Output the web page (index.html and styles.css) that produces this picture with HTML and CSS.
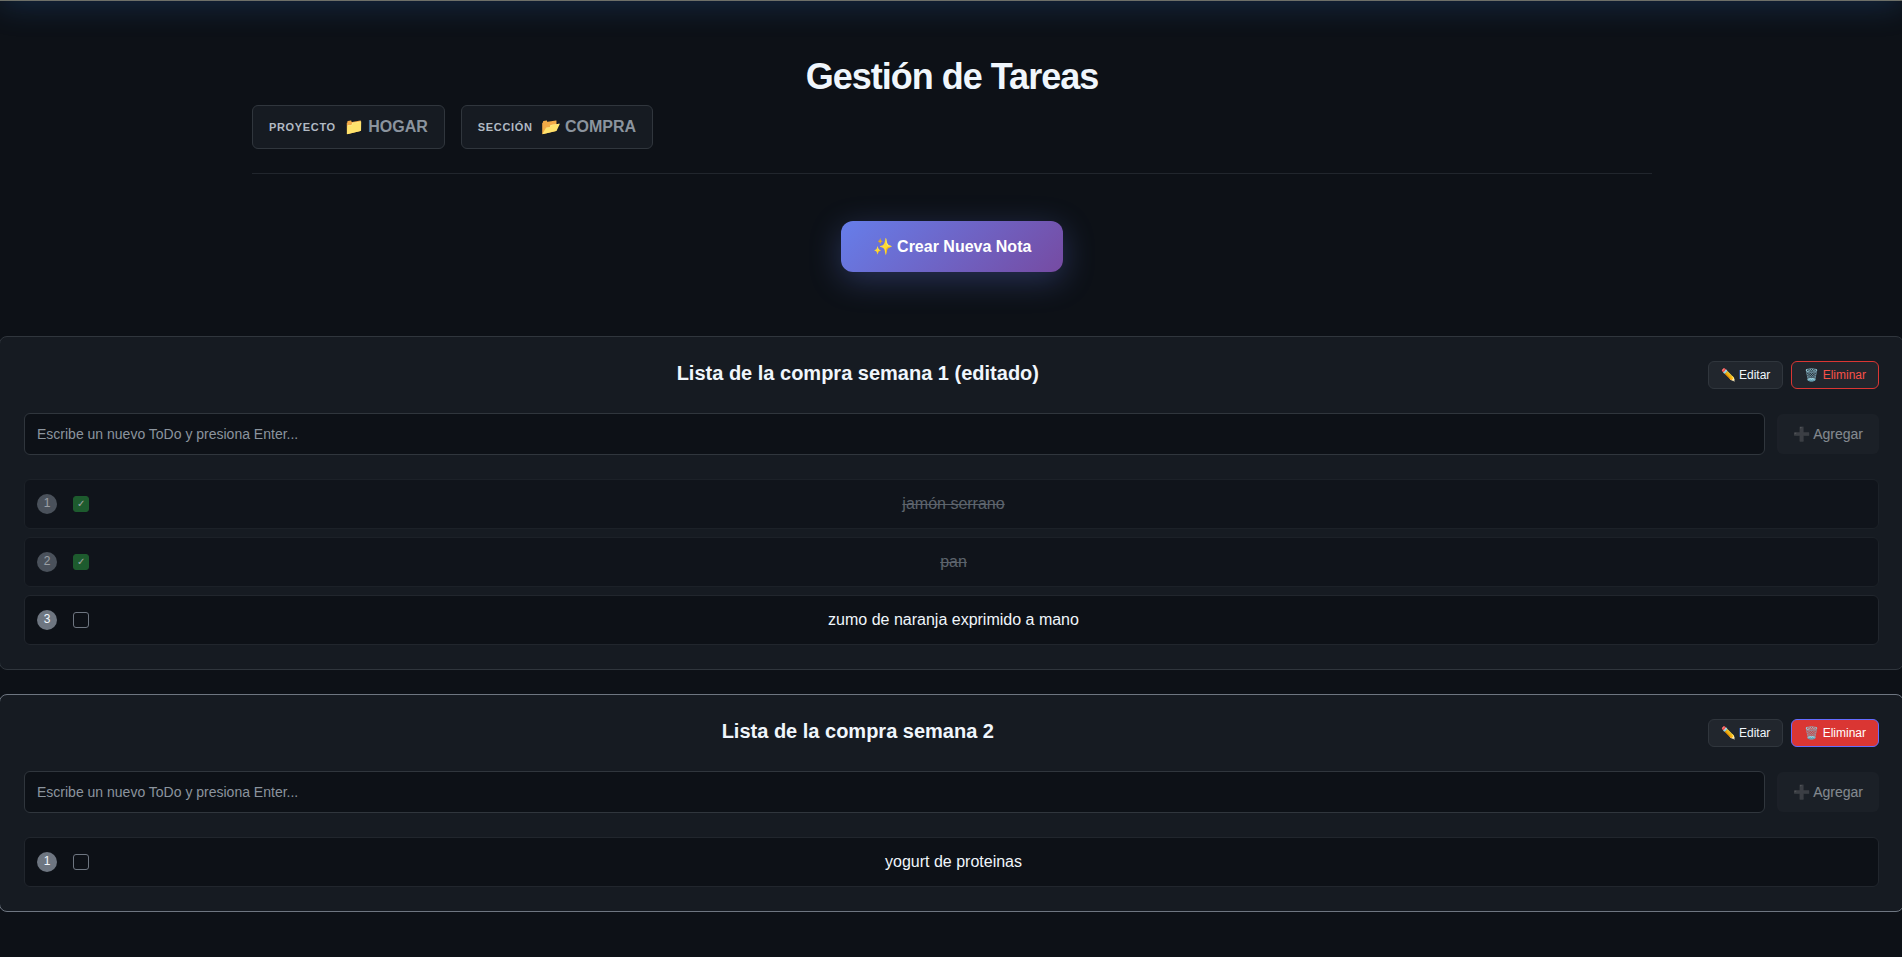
FILE: index.html
```html
<!DOCTYPE html>
<html lang="es">
<head>
<meta charset="utf-8">
<meta name="viewport" content="width=device-width, initial-scale=1">
<title>Gestión de Tareas</title>
<link rel="stylesheet" href="styles.css">
</head>
<body>
<div class="topbar-glow"></div>
<main class="page">
  <header class="header">
    <h1 class="header-title">Gestión de Tareas</h1>
    <div class="crumbs">
      <div class="crumb"><span class="crumb-label">Proyecto</span><span class="crumb-value">📁 HOGAR</span></div>
      <div class="crumb"><span class="crumb-label">Sección</span><span class="crumb-value">📂 COMPRA</span></div>
    </div>
  </header>
  <div class="create">
    <button class="create-button" type="button">✨ Crear Nueva Nota</button>
  </div>
  <section class="notes">
    <article class="note">
      <div class="note-header">
        <h2 class="note-title">Lista de la compra semana 1 (editado)</h2>
        <div class="note-actions">
          <button class="action" type="button">✏️ Editar</button>
          <button class="action action-delete" type="button">🗑️ Eliminar</button>
        </div>
      </div>
      <form class="todo-form">
        <input class="todo-input" type="text" aria-label="Nuevo ToDo" placeholder="Escribe un nuevo ToDo y presiona Enter...">
        <button class="todo-add" type="submit" disabled>➕ Agregar</button>
      </form>
      <ol class="todos">
        <li class="todo todo-done"><span class="todo-number">1</span><input class="todo-check" type="checkbox" id="todo-1" checked><label class="todo-text" for="todo-1">jamón serrano</label></li>
        <li class="todo todo-done"><span class="todo-number">2</span><input class="todo-check" type="checkbox" id="todo-2" checked><label class="todo-text" for="todo-2">pan</label></li>
        <li class="todo"><span class="todo-number">3</span><input class="todo-check" type="checkbox" id="todo-3"><label class="todo-text" for="todo-3">zumo de naranja exprimido a mano</label></li>
      </ol>
    </article>
    <article class="note note-active">
      <div class="note-header">
        <h2 class="note-title">Lista de la compra semana 2</h2>
        <div class="note-actions">
          <button class="action" type="button">✏️ Editar</button>
          <button class="action action-delete action-hot" type="button">🗑️ Eliminar</button>
        </div>
      </div>
      <form class="todo-form">
        <input class="todo-input" type="text" aria-label="Nuevo ToDo" placeholder="Escribe un nuevo ToDo y presiona Enter...">
        <button class="todo-add" type="submit" disabled>➕ Agregar</button>
      </form>
      <ol class="todos">
        <li class="todo"><span class="todo-number">1</span><input class="todo-check" type="checkbox" id="todo-4"><label class="todo-text" for="todo-4">yogurt de proteinas</label></li>
      </ol>
    </article>
  </section>
</main>
</body>
</html>
```

FILE: styles.css
```css
* {
  box-sizing: border-box;
}

body {
  margin: 0;
  overflow-x: hidden;
  background: #0d1117;
  color: #f0f6fc;
  font-family: "Liberation Sans", Arial, sans-serif;
  font-size: 16px;
  line-height: 24px;
}

button,
input {
  font-family: inherit;
}

/* Lower edge and halo of the bar above the page */
.topbar-glow {
  position: absolute;
  top: -60px;
  left: 0;
  right: 0;
  height: 61px;
  border-bottom: 1px solid #6e7068;
  box-shadow: 0 4px 32px rgba(48, 130, 230, 0.22);
}

.page {
  margin-right: -2px;
  padding: 52px 0 40px;
}

.header {
  max-width: 1400px;
  margin: 0 auto;
  padding-bottom: 24px;
  border-bottom: 1px solid #21262d;
}

.header-title {
  margin: 0 0 4px;
  font-size: 36px;
  line-height: 49px;
  letter-spacing: -1px;
  text-align: center;
}

.crumbs {
  display: flex;
  gap: 16px;
}

.crumb {
  display: flex;
  align-items: center;
  gap: 8px;
  padding: 8px 16px;
  border: 1px solid #30363d;
  border-radius: 6px;
  background: #161b22;
  line-height: 26px;
  font-weight: 600;
}

.crumb-label {
  color: #b1bac4;
  font-size: 11px;
  letter-spacing: 0.06em;
  text-transform: uppercase;
}

.crumb-value {
  color: #8b949e;
}

.create {
  display: flex;
  justify-content: center;
  padding: 47px 0 64px;
}

.create-button {
  padding: 16px 32px;
  border: 0;
  border-radius: 12px;
  background: linear-gradient(135deg, #667eea, #764ba2);
  box-shadow: 0 8px 32px rgba(102, 126, 234, 0.3);
  color: #fff;
  font-size: 16px;
  font-weight: 600;
  line-height: 19px;
}

.notes {
  display: grid;
  gap: 24px;
  margin-left: -1px;
}

.note {
  padding: 24px;
  border: 1px solid #30363d;
  border-radius: 8px;
  background: #161b22;
}

.note-active {
  border-color: #6e7681;
}

.note-header {
  display: flex;
  gap: 16px;
  margin-bottom: 24px;
}

.note-title {
  flex: 1;
  margin: 0;
  font-size: 20px;
  line-height: 25px;
  text-align: center;
}

.note-actions {
  display: flex;
  gap: 8px;
}

.action {
  padding: 6px 12px;
  border: 1px solid #30363d;
  border-radius: 6px;
  background: #21262d;
  color: #f0f6fc;
  font-size: 12px;
  line-height: 14px;
}

.action-delete {
  border-color: #da3633;
  color: #f85149;
}

.action-hot {
  border-color: #646cff;
  background: #da3633;
  color: #fff;
}

.todo-form {
  display: flex;
  align-items: center;
  gap: 12px;
  margin-bottom: 24px;
}

.todo-input {
  flex: 1;
  min-width: 0;
  padding: 12px;
  border: 1px solid #30363d;
  border-radius: 6px;
  background: #0d1117;
  color: #f0f6fc;
  font-size: 14px;
  line-height: 16px;
}

.todo-input::placeholder {
  color: #8b949e;
}

.todo-add {
  padding: 12px 16px;
  border: 0;
  border-radius: 6px;
  background: #21262d;
  color: #f0f6fc;
  font-size: 14px;
  line-height: 16px;
  opacity: 0.5;
}

.todos {
  display: grid;
  gap: 8px;
  margin: 0;
  padding: 0;
  list-style: none;
}

.todo {
  display: flex;
  align-items: center;
  gap: 16px;
  padding: 12px;
  border: 1px solid #21262d;
  border-radius: 6px;
  background: #0d1117;
}

.todo-done {
  opacity: 0.6;
}

.todo-number {
  width: 20px;
  height: 20px;
  border-radius: 50%;
  background: #6e7681;
  font-size: 12px;
  line-height: 18px;
  text-align: center;
}

.todo-check {
  display: grid;
  place-items: center;
  width: 16px;
  height: 16px;
  margin: 0;
  border: 1px solid #6e7681;
  border-radius: 3px;
  appearance: none;
}

.todo-check:checked {
  border-color: #238636;
  background: #238636;
}

.todo-check:checked::before {
  content: "✓";
  color: #fff;
  font-size: 10px;
  line-height: 14px;
}

.todo-text {
  flex: 1;
  padding-right: 64px;
  text-align: center;
}

.todo-done .todo-text {
  color: #8b949e;
  text-decoration: line-through;
}
```
